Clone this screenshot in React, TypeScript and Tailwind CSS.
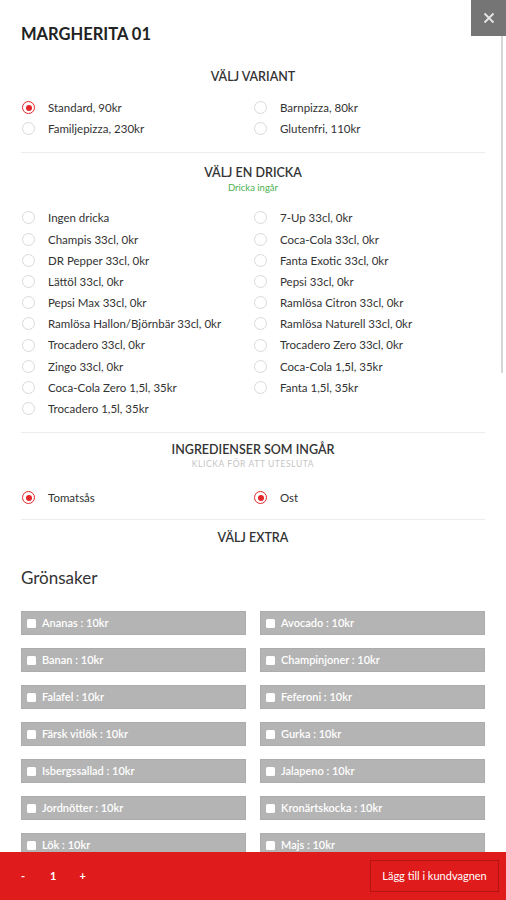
import React from "react";

const variants = [
  ["Standard, 90kr", true],
  ["Barnpizza, 80kr", false],
  ["Familjepizza, 230kr", false],
  ["Glutenfri, 110kr", false],
] as const;

const drinks = [
  "Ingen dricka",
  "7-Up 33cl, 0kr",
  "Champis 33cl, 0kr",
  "Coca-Cola 33cl, 0kr",
  "DR Pepper 33cl, 0kr",
  "Fanta Exotic 33cl, 0kr",
  "Lättöl 33cl, 0kr",
  "Pepsi 33cl, 0kr",
  "Pepsi Max 33cl, 0kr",
  "Ramlösa Citron 33cl, 0kr",
  "Ramlösa Hallon/Björnbär 33cl, 0kr",
  "Ramlösa Naturell 33cl, 0kr",
  "Trocadero 33cl, 0kr",
  "Trocadero Zero 33cl, 0kr",
  "Zingo 33cl, 0kr",
  "Coca-Cola 1,5l, 35kr",
  "Coca-Cola Zero 1,5l, 35kr",
  "Fanta 1,5l, 35kr",
  "Trocadero 1,5l, 35kr",
];

const extras = [
  "Ananas : 10kr",
  "Avocado : 10kr",
  "Banan : 10kr",
  "Champinjoner : 10kr",
  "Falafel : 10kr",
  "Feferoni : 10kr",
  "Färsk vitlök : 10kr",
  "Gurka : 10kr",
  "Isbergssallad : 10kr",
  "Jalapeno : 10kr",
  "Jordnötter : 10kr",
  "Kronärtskocka : 10kr",
  "Lök : 10kr",
  "Majs : 10kr",
];

function Radio({ label, checked }: { label: string; checked?: boolean }) {
  return (
    <div className="flex items-center h-[21.2px]">
      {checked ? (
        <span className="ml-[1px] w-[13px] h-[13px] rounded-full border-[1.5px] border-[#e3262a] flex items-center justify-center shrink-0">
          <span className="w-[6px] h-[6px] rounded-full bg-[#e3262a]" />
        </span>
      ) : (
        <span className="ml-[1px] w-[13px] h-[13px] rounded-full border border-[#d9d9d9] shrink-0" />
      )}
      <span className="ml-[13px] text-[11.5px] text-[#333] whitespace-nowrap">{label}</span>
    </div>
  );
}

function Heading({ children }: { children: React.ReactNode }) {
  return (
    <div className="text-center text-[12.5px] leading-[18px] font-semibold text-[#333]">
      {children}
    </div>
  );
}

export default function App() {
  return (
    <div
      className="relative w-[506px] h-[900px] bg-white flex flex-col overflow-hidden"
      style={{ fontFamily: "Lato, 'Noto Sans', sans-serif" }}
    >
      <div className="flex-1 overflow-hidden px-[21px] pt-[23px]">
        <h1 className="text-[16.5px] leading-[22px] font-bold text-[#222]">MARGHERITA 01</h1>

        <div className="mt-[23px]">
          <Heading>VÄLJ VARIANT</Heading>
        </div>
        <div className="mt-[11px] grid grid-cols-2">
          {variants.map(([l, c]) => (
            <Radio key={l} label={l} checked={c} />
          ))}
        </div>

        <div className="mt-[13px] border-t border-[#ececec]" />
        <div className="mt-[11px]">
          <Heading>VÄLJ EN DRICKA</Heading>
        </div>
        <div className="mt-[1px] text-center text-[9.5px] leading-[10px] text-[#4caf50]">Dricka ingår</div>
        <div className="mt-[14px] grid grid-cols-2">
          {drinks.map((d) => (
            <Radio key={d} label={d} />
          ))}
        </div>

        <div className="mt-[13px] border-t border-[#ececec]" />
        <div className="mt-[8px]">
          <Heading>INGREDIENSER SOM INGÅR</Heading>
        </div>
        <div className="text-center text-[8.5px] leading-[10px] tracking-[0.6px] text-[#c4c4c4] uppercase">
          Klicka för att utesluta
        </div>
        <div className="mt-[18px] grid grid-cols-2">
          <Radio label="Tomatsås" checked />
          <Radio label="Ost" checked />
        </div>

        <div className="mt-[11px] border-t border-[#ececec]" />
        <div className="mt-[9px]">
          <Heading>VÄLJ EXTRA</Heading>
        </div>
        <div className="mt-[19px] text-[17px] leading-[24px] text-[#333]">Grönsaker</div>

        <div className="mt-[21px] grid grid-cols-2 gap-x-[14px] gap-y-[13.5px]">
          {extras.map((e) => (
            <div
              key={e}
              className="h-[23.5px] bg-[#b4b4b4] border border-[#acacac] flex items-center pl-[5px]"
            >
              <span className="w-[9px] h-[9px] bg-white rounded-[1.5px] shrink-0" />
              <span className="ml-[6px] text-[11px] text-white font-semibold whitespace-nowrap">{e}</span>
            </div>
          ))}
        </div>
      </div>

      <div className="h-[48px] bg-[#e01b1b] flex items-center shrink-0">
        <div className="flex items-center text-white text-[11px] font-bold">
          <span className="ml-[21px]">-</span>
          <span className="ml-[25px]">1</span>
          <span className="ml-[23px]">+</span>
        </div>
        <div className="ml-auto mr-[7px] h-[32px] w-[129px] border border-[#b51414] flex items-center justify-center text-white text-[11px]">
          Lägg till i kundvagnen
        </div>
      </div>

      <button className="absolute top-0 right-0 w-[35px] h-[36px] bg-[#757575] flex items-center justify-center">
        <svg width="12" height="12" viewBox="0 0 12 12">
          <path d="M1.5 1.5 L10.5 10.5 M10.5 1.5 L1.5 10.5" stroke="#e6e6e6" strokeWidth="1.8" />
        </svg>
      </button>
      <div className="absolute right-[3px] top-[36px] w-[2px] h-[337px] bg-[#d6d6d6]" />
    </div>
  );
}
